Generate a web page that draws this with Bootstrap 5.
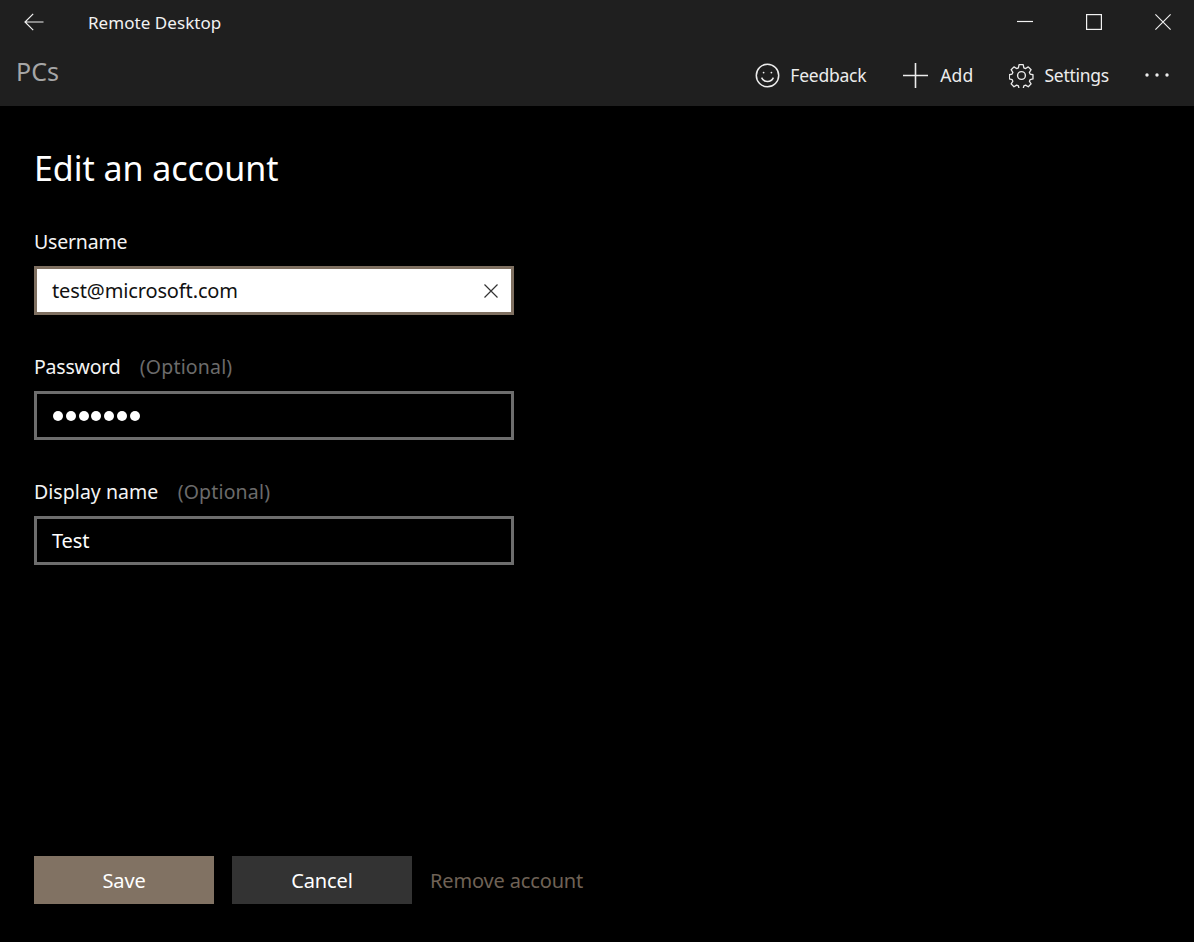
<!DOCTYPE html>
<html lang="en">
<head>
<meta charset="utf-8">
<title>Remote Desktop</title>
<link href="https://cdn.jsdelivr.net/npm/bootstrap@5.3.0/dist/css/bootstrap.min.css" rel="stylesheet">
<style>
html,body{height:942px;overflow:hidden;background:#000;}
body{font-family:"Noto Sans","Open Sans",sans-serif;color:#fff;}
.app-shell{height:942px;}
.app-head{background:#1f1f1f;height:106px;flex:none;}
.title-row{height:44px;}
.back-btn{width:88px;padding-left:24px;}
.app-name{font-size:17px;line-height:24px;color:#f2f2f2;letter-spacing:.05px;margin-top:1px;}
.win-btn{width:69px;height:44px;}
.win-strip{margin-right:-3px;}
.cmd-row{height:62px;}
.page-name{font-size:25px;line-height:34px;color:#a6a6a6;padding-left:16px;margin-top:-9px;}
.cmd-item{font-size:17.5px;line-height:24px;color:#ececec;letter-spacing:-.25px;gap:10px;margin-right:36px;}
.cmd-fb{margin-right:37px;}
.cmd-plus{gap:12px;letter-spacing:.15px;}
.cmd-more{margin-right:25px;}
.form-area{padding:0 34px 38px;}
.form-title{font-size:34px;line-height:46px;font-weight:400;margin:39px 0 37px;letter-spacing:-.05px;}
.fld{width:480px;margin-bottom:38px;}
.fld-label{font-size:19.5px;line-height:28px;margin-bottom:10px;height:28px;letter-spacing:-.2px;color:#f4f4f4;}
.lbl-wide{letter-spacing:.05px;}
.fld-hint{color:#6b6b6b;margin-left:14px;letter-spacing:.17px;}
.fld-box{height:49px;border:3px solid #6d6d6d;padding:0 15px;font-size:20px;letter-spacing:-.13px;}
.fld-box.active-box{background:#fff;border-color:#7f7061;color:#111;}
.clear-x{margin-right:-2px;}
.pw-dots{gap:2.8px;padding-left:1px;}
.pw-dot{width:10px;height:10px;border-radius:50%;background:#fff;}
.act-row{gap:18px;}
.act-btn{width:180px;height:48px;font-size:20px;line-height:28px;border:0;border-radius:0;color:#fff;padding:2px 0 0;letter-spacing:-.13px;}
.act-save{background:#817263;}
.act-cancel{background:#333;}
.act-link{font-size:20px;line-height:28px;color:#6f6256;letter-spacing:-.15px;padding-top:2px;}
</style>
</head>
<body>
<div class="app-shell d-flex flex-column">
  <header class="app-head">
    <div class="title-row d-flex align-items-center">
      <div class="back-btn d-flex align-items-center">
        <svg width="20" height="18" viewBox="0 0 20 18" fill="none" stroke="#f2f2f2" stroke-width="1.2"><path d="M19.500 9H1M9.200 .8 1 9l8.200 8.200"/></svg>
      </div>
      <div class="app-name">Remote Desktop</div>
      <div class="win-strip d-flex ms-auto">
        <div class="win-btn d-flex align-items-center justify-content-center">
          <svg width="16" height="16" viewBox="0 0 16 16" fill="none" stroke="#f2f2f2" stroke-width="1.2"><path d="M0 7.500h16"/></svg>
        </div>
        <div class="win-btn d-flex align-items-center justify-content-center">
          <svg width="16" height="16" viewBox="0 0 16 16" fill="none" stroke="#f2f2f2" stroke-width="1.2"><rect x=".6" y=".6" width="14.800" height="14.800"/></svg>
        </div>
        <div class="win-btn d-flex align-items-center justify-content-center">
          <svg width="16" height="16" viewBox="0 0 16 16" fill="none" stroke="#f2f2f2" stroke-width="1.1"><path d="M.4.4l15.200 15.200M15.600.4.4 15.600"/></svg>
        </div>
      </div>
    </div>
    <div class="cmd-row d-flex align-items-center">
      <div class="page-name">PCs</div>
      <div class="d-flex align-items-center ms-auto">
        <div class="cmd-item cmd-fb d-flex align-items-center">
          <svg width="25" height="25" viewBox="0 0 25 25" fill="none" stroke="#ececec" stroke-width="1.500"><circle cx="12.500" cy="12.500" r="11.200"/><circle cx="8.600" cy="9.600" r=".9" fill="#ececec" stroke="none"/><circle cx="16.400" cy="9.600" r=".9" fill="#ececec" stroke="none"/><path d="M6.600 14.600c1.200 2.600 3.300 3.900 5.900 3.900s4.700-1.300 5.900-3.900"/></svg>
          <span>Feedback</span>
        </div>
        <div class="cmd-item cmd-plus d-flex align-items-center">
          <svg width="25" height="25" viewBox="0 0 25 25" fill="none" stroke="#ececec" stroke-width="1.600"><path d="M12.500 0v25M0 12.500h25"/></svg>
          <span>Add</span>
        </div>
        <div class="cmd-item d-flex align-items-center">
          <svg width="25" height="25" viewBox="0 0 25 25" fill="none" stroke="#ececec" stroke-width="1.400" stroke-linejoin="round"><circle cx="12.500" cy="12.500" r="3.900"/><path d="M10.300 1h4.400l.7 3.300 1.900.8 2.800-1.800 3 3.100-1.800 2.800.8 1.800 3 .7v4.400l-3 .7-.8 1.800 1.800 2.800-3 3.100-2.800-1.800-1.900.8-.7 2.900h-4.400l-.7-2.900-1.900-.8-2.800 1.800-3-3.100 1.800-2.800-.8-1.800-3-.7v-4.400l3-.7.8-1.800-1.800-2.800 3-3.100 2.800 1.800 1.900-.8z" transform="translate(12.500 12.500) scale(.94) translate(-12.900 -12.500)"/></svg>
          <span>Settings</span>
        </div>
        <div class="cmd-more d-flex align-items-center">
          <svg width="24" height="4" viewBox="0 0 24 4" fill="#ececec"><circle cx="2" cy="2" r="1.700"/><circle cx="12" cy="2" r="1.700"/><circle cx="22" cy="2" r="1.700"/></svg>
        </div>
      </div>
    </div>
  </header>
  <main class="form-area d-flex flex-column flex-grow-1">
    <h1 class="form-title">Edit an account</h1>
    <div class="fld">
      <div class="fld-label">Username</div>
      <div class="fld-box active-box d-flex align-items-center justify-content-between">
        <span>test@microsoft.com</span>
        <svg class="clear-x" width="14" height="14" viewBox="0 0 14 14" fill="none" stroke="#333" stroke-width="1.200"><path d="M.5.5l13 13M13.500.5l-13 13"/></svg>
      </div>
    </div>
    <div class="fld">
      <div class="fld-label">Password<span class="fld-hint">&nbsp;(Optional)</span></div>
      <div class="fld-box d-flex align-items-center">
        <div class="pw-dots d-flex" role="img" aria-label="password">
          <span class="pw-dot"></span><span class="pw-dot"></span><span class="pw-dot"></span><span class="pw-dot"></span><span class="pw-dot"></span><span class="pw-dot"></span><span class="pw-dot"></span>
        </div>
      </div>
    </div>
    <div class="fld">
      <div class="fld-label lbl-wide">Display name<span class="fld-hint">&nbsp;(Optional)</span></div>
      <div class="fld-box d-flex align-items-center"><span>Test</span></div>
    </div>
    <div class="act-row d-flex align-items-center mt-auto">
      <button type="button" class="btn act-btn act-save">Save</button>
      <button type="button" class="btn act-btn act-cancel">Cancel</button>
      <span class="act-link">Remove account</span>
    </div>
  </main>
</div>
<script src="https://cdn.jsdelivr.net/npm/bootstrap@5.3.0/dist/js/bootstrap.bundle.min.js"></script>
</body>
</html>
